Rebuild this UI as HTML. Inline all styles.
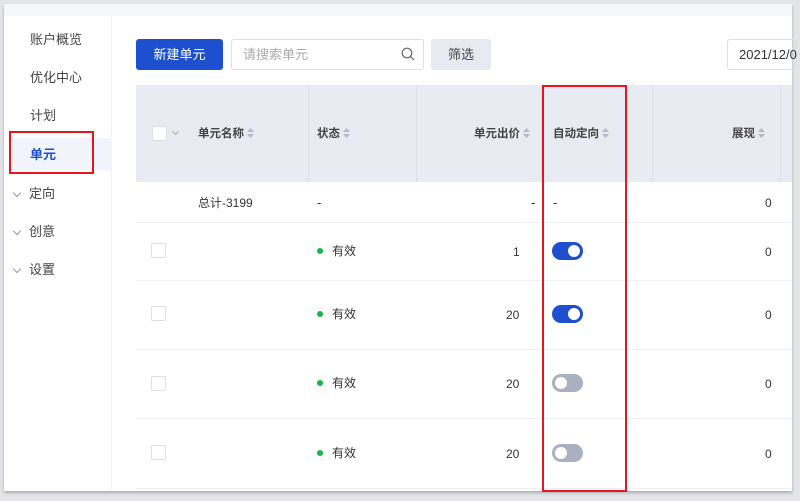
<!DOCTYPE html>
<html><head><meta charset="utf-8"><style>
*{margin:0;padding:0;box-sizing:border-box}
body{width:800px;height:501px;background:#e4e5e8;font-family:"Liberation Sans","Noto Sans CJK SC",sans-serif;position:relative;overflow:hidden;color:#333}
.a{position:absolute}
.t{font-size:13px;white-space:nowrap;line-height:16px}
.hd{font-size:11.5px;color:#444;font-weight:bold;white-space:nowrap;line-height:14px}
.arr{display:inline-block;vertical-align:middle;margin-left:3px;margin-top:-2px}
.cb{width:15px;height:15px;border:1px solid #dcdfe6;border-radius:2px;background:#fff}
.sw{width:31px;height:18px;border-radius:9px}
.sw i{position:absolute;top:3px;width:12px;height:12px;border-radius:50%;background:#fff}
.on{background:#1d4fce}.on i{right:3px}
.off{background:#a9b0bf}.off i{left:3px}
.dot{width:6px;height:6px;border-radius:50%;background:#18b54a}
.row{left:136px;width:656px;height:1px;background:#eef0f4}
.chev{display:inline-block;width:6px;height:6px;border-right:1px solid #999;border-bottom:1px solid #999;transform:rotate(45deg);margin:0 9px 3px 2px;vertical-align:middle}
</style></head><body>
<div class="a" style="left:4px;top:4px;width:788px;height:487px;background:#fff;box-shadow:0 2px 3px rgba(0,0,0,.25)"></div>
<div class="a" style="left:4px;top:4px;width:788px;height:12px;background:#f6f7f9"></div>
<div class="a" style="left:4px;top:16px;width:108px;height:475px;background:#fff;border-right:1px solid #f0f1f4"></div>
<div class="a" style="left:12px;top:138px;width:100px;height:32px;background:#f1f4fb"></div>
<div class="a t" style="left:30px;top:32px;color:#444">账户概览</div>
<div class="a t" style="left:30px;top:70px;color:#444">优化中心</div>
<div class="a t" style="left:30px;top:108px;color:#444">计划</div>
<div class="a t" style="left:30px;top:147px;color:#1d4fce;font-weight:bold">单元</div>
<div class="a t" style="left:12px;top:186px;color:#444"><span class="chev"></span>定向</div>
<div class="a t" style="left:12px;top:224px;color:#444"><span class="chev"></span>创意</div>
<div class="a t" style="left:12px;top:262px;color:#444"><span class="chev"></span>设置</div>
<div class="a" style="left:9px;top:131px;width:85px;height:43px;border:2px solid #e8151d"></div>

<div class="a t" style="left:136px;top:39px;width:87px;height:31px;background:#1d4fce;border-radius:3px;color:#fff;text-align:center;line-height:31px">新建单元</div>
<div class="a" style="left:231px;top:39px;width:193px;height:31px;border:1px solid #dcdfe6;border-radius:3px"></div>
<div class="a t" style="left:243px;top:47px;color:#aaa">请搜索单元</div>
<svg class="a" style="left:401px;top:47px" width="14" height="14"><circle cx="6" cy="6" r="4.8" stroke="#666" stroke-width="1.2" fill="none"/><path d="M9.5 9.5L13 13" stroke="#666" stroke-width="1.2"/></svg>
<div class="a t" style="left:431px;top:39px;width:60px;height:31px;background:#e8eaf1;border-radius:3px;text-align:center;line-height:31px;color:#444">筛选</div>
<div class="a t" style="left:727px;top:39px;width:70px;height:31px;border:1px solid #dcdfe6;border-radius:3px;padding-left:11px;line-height:29px;color:#333">2021/12/0</div>

<div class="a" style="left:136px;top:85px;width:656px;height:97px;background:#e9ebf2"></div>
<div class="a" style="left:308px;top:85px;width:1px;height:97px;background:#dcdfe8"></div>
<div class="a" style="left:416px;top:85px;width:1px;height:97px;background:#dcdfe8"></div>
<div class="a" style="left:541px;top:85px;width:1px;height:97px;background:#dcdfe8"></div>
<div class="a" style="left:652px;top:85px;width:1px;height:97px;background:#dcdfe8"></div>
<div class="a" style="left:780px;top:85px;width:1px;height:97px;background:#dcdfe8"></div>
<div class="a cb" style="left:152px;top:126px"></div>
<div class="a" style="left:173px;top:129px;width:5px;height:5px;border-right:1px solid #aaa;border-bottom:1px solid #aaa;transform:rotate(45deg)"></div>
<div class="a hd" style="left:198px;top:127px">单元名称<svg class="arr" width="7" height="10"><path d="M3.5 0L7 4H0z M3.5 10L7 6H0z" fill="#b3b8c6"/></svg></div>
<div class="a hd" style="left:317px;top:127px">状态<svg class="arr" width="7" height="10"><path d="M3.5 0L7 4H0z M3.5 10L7 6H0z" fill="#b3b8c6"/></svg></div>
<div class="a hd" style="left:474px;top:127px">单元出价<svg class="arr" width="7" height="10"><path d="M3.5 0L7 4H0z M3.5 10L7 6H0z" fill="#b3b8c6"/></svg></div>
<div class="a hd" style="left:553px;top:127px">自动定向<svg class="arr" width="7" height="10"><path d="M3.5 0L7 4H0z M3.5 10L7 6H0z" fill="#b3b8c6"/></svg></div>
<div class="a hd" style="left:732px;top:127px">展现<svg class="arr" width="7" height="10"><path d="M3.5 0L7 4H0z M3.5 10L7 6H0z" fill="#b3b8c6"/></svg></div>

<div class="a t" style="left:198px;top:195px;font-size:12px">总计-3199</div>
<div class="a t" style="left:317px;top:195px">-</div>
<div class="a t" style="left:531px;top:195px">-</div>
<div class="a t" style="left:553px;top:195px">-</div>
<div class="a t" style="left:765px;top:195px;font-size:12px">0</div>

<div class="a row" style="top:222px"></div>
<div class="a row" style="top:280px"></div>
<div class="a row" style="top:349px"></div>
<div class="a row" style="top:418px"></div>
<div class="a row" style="top:488px"></div>

<div class="a cb" style="left:151px;top:243px"></div>
<div class="a dot" style="left:317px;top:248px"></div>
<div class="a t" style="left:332px;top:243px;font-size:12px">有效</div>
<div class="a t" style="left:513px;top:244px;font-size:12px">1</div>
<div class="a sw on" style="left:552px;top:242px"><i></i></div>
<div class="a t" style="left:765px;top:244px;font-size:12px">0</div>

<div class="a cb" style="left:151px;top:306px"></div>
<div class="a dot" style="left:317px;top:311px"></div>
<div class="a t" style="left:332px;top:306px;font-size:12px">有效</div>
<div class="a t" style="left:506px;top:307px;font-size:12px">20</div>
<div class="a sw on" style="left:552px;top:305px"><i></i></div>
<div class="a t" style="left:765px;top:307px;font-size:12px">0</div>

<div class="a cb" style="left:151px;top:376px"></div>
<div class="a dot" style="left:317px;top:380px"></div>
<div class="a t" style="left:332px;top:375px;font-size:12px">有效</div>
<div class="a t" style="left:506px;top:376px;font-size:12px">20</div>
<div class="a sw off" style="left:552px;top:374px"><i></i></div>
<div class="a t" style="left:765px;top:376px;font-size:12px">0</div>

<div class="a cb" style="left:151px;top:445px"></div>
<div class="a dot" style="left:317px;top:450px"></div>
<div class="a t" style="left:332px;top:445px;font-size:12px">有效</div>
<div class="a t" style="left:506px;top:446px;font-size:12px">20</div>
<div class="a sw off" style="left:552px;top:444px"><i></i></div>
<div class="a t" style="left:765px;top:446px;font-size:12px">0</div>

<div class="a" style="left:542px;top:85px;width:85px;height:407px;border:2px solid #e8151d"></div>
</body></html>
